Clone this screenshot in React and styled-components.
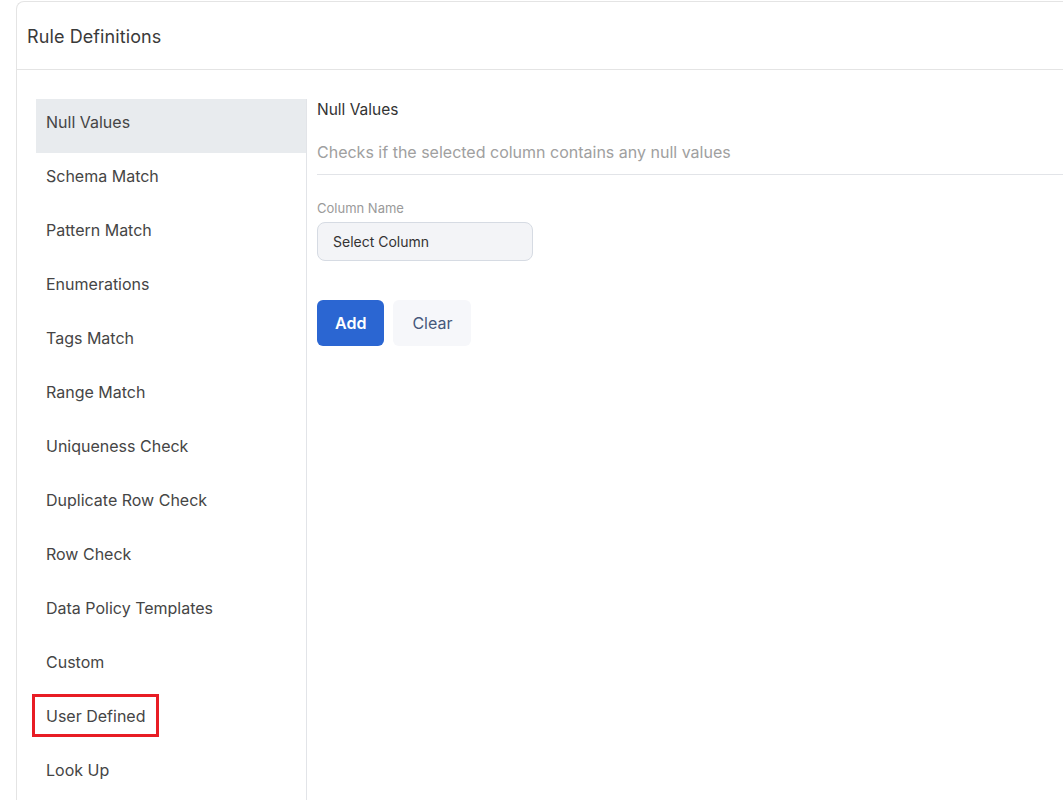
import React from "react"
import styled, { createGlobalStyle } from "styled-components"

const GlobalStyle = createGlobalStyle`
  html, body {
    margin: 0;
    padding: 0;
    background: #fff;
    font-family: Inter, "Noto Sans", sans-serif;
    overflow: hidden;
  }
`

const Page = styled.div`
  padding: 1px 0 0 16px;
  height: 800px;
  box-sizing: border-box;
`

const Card = styled.div`
  border: 1px solid #e4e4e4;
  border-right: none;
  border-bottom: none;
  border-radius: 8px 0 0 0;
  height: 100%;
  display: flex;
  flex-direction: column;
`

const CardHeader = styled.div`
  height: 68px;
  box-sizing: border-box;
  padding: 2px 0 0 10px;
  border-bottom: 1px solid #e4e4e4;
  display: flex;
  align-items: center;
  font-size: 18px;
  color: #3a3a3a;
  letter-spacing: 0.1px;
`

const Body = styled.div`
  flex: 1;
  display: flex;
  padding: 29px 0 0 19px;
`

const Sidebar = styled.div`
  width: 270px;
  border-right: 1px solid #e2e4e8;
  display: flex;
  flex-direction: column;
`

const NavItem = styled.div`
  height: 54px;
  box-sizing: border-box;
  padding: 13px 0 0 10px;
  font-size: 16px;
  line-height: 20px;
  color: #454545;
  background: ${p => (p.$active ? "#e8ebee" : "transparent")};
`

const Marked = styled.span`
  display: inline-block;
  outline: 3px solid #e81c24;
  padding: 9px 11px 8px;
  margin: -10px 0 0 -11px;
`

const Content = styled.div`
  flex: 1;
  padding-left: 10px;
  display: flex;
  flex-direction: column;
`

const Title = styled.div`
  font-size: 15.5px;
  color: #333;
  margin-top: 1px;
  line-height: 20px;
`

const Description = styled.div`
  font-size: 16px;
  color: #a0a0a0;
  margin-top: 22px;
  padding-bottom: 12px;
  border-bottom: 1px solid #e2e4e8;
  line-height: 20px;
`

const Label = styled.div`
  font-size: 13px;
  color: #9a9a9a;
  margin-top: 25px;
  line-height: 16px;
`

const Select = styled.div`
  width: 216px;
  height: 39px;
  box-sizing: border-box;
  margin-top: 6px;
  border: 1px solid #d6dbe3;
  border-radius: 8px;
  background: #f3f4f7;
  display: flex;
  align-items: center;
  padding-left: 15px;
  font-size: 14px;
  color: #333;
`

const Actions = styled.div`
  display: flex;
  gap: 9px;
  margin-top: 39px;
`

const Button = styled.button`
  height: 46px;
  border: none;
  border-radius: 6px;
  font-family: inherit;
  font-size: 16px;
  padding: 0 ${p => (p.$primary ? 18 : 19)}px;
  cursor: pointer;
  background: ${p => (p.$primary ? "#2b66d2" : "#f6f7fa")};
  color: ${p => (p.$primary ? "#fff" : "#45587b")};
  font-weight: ${p => (p.$primary ? 600 : 400)};
`

const rules = [
  "Null Values",
  "Schema Match",
  "Pattern Match",
  "Enumerations",
  "Tags Match",
  "Range Match",
  "Uniqueness Check",
  "Duplicate Row Check",
  "Row Check",
  "Data Policy Templates",
  "Custom",
  "User Defined",
  "Look Up",
]

export default function App() {
  return (
    <>
      <GlobalStyle />
      <Page>
        <Card>
          <CardHeader>Rule Definitions</CardHeader>
          <Body>
            <Sidebar>
              {rules.map((r, i) => (
                <NavItem key={r} $active={i === 0}>
                  {r === "User Defined" ? <Marked>{r}</Marked> : r}
                </NavItem>
              ))}
            </Sidebar>
            <Content>
              <Title>Null Values</Title>
              <Description>Checks if the selected column contains any null values</Description>
              <Label>Column Name</Label>
              <Select>Select Column</Select>
              <Actions>
                <Button $primary>Add</Button>
                <Button>Clear</Button>
              </Actions>
            </Content>
          </Body>
        </Card>
      </Page>
    </>
  )
}
